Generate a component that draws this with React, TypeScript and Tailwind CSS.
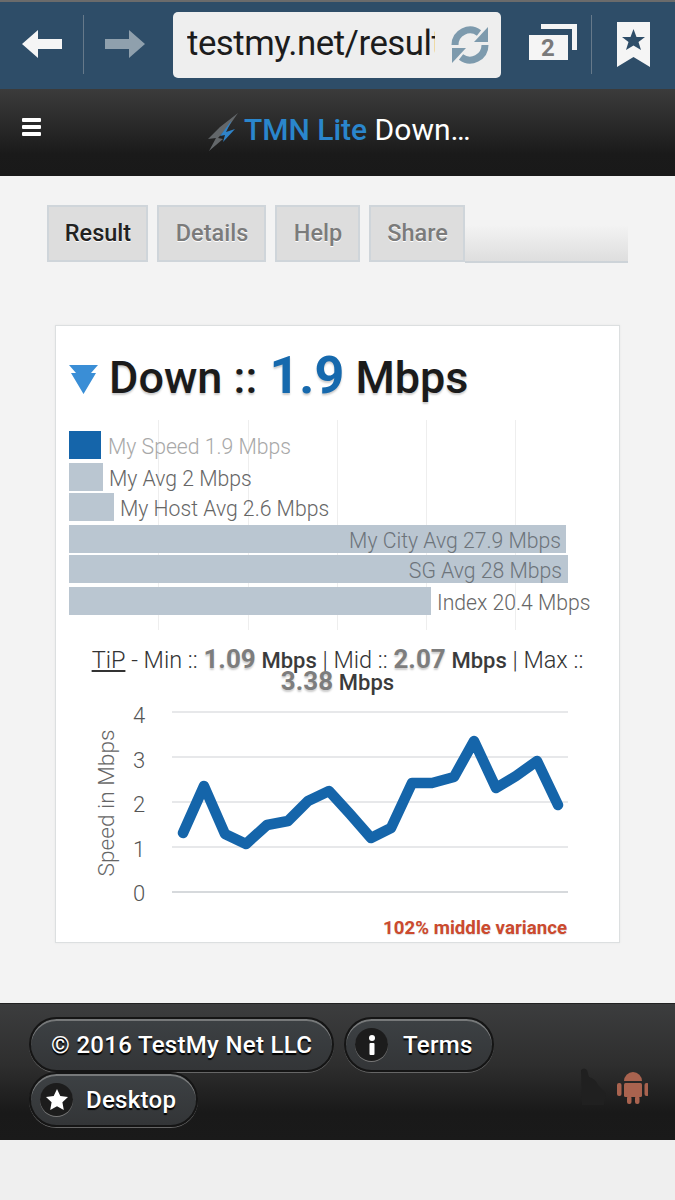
import React from "react";

const pts = "183,832 204,785 225,833 246,843 267,824 288,820 308,800 329,790 350,813 371,837 391,827 412,782 432,782 454,776 474,740 496,787 516,775 537,760 558,804";

function Arrow({ color, flip }: { color: string; flip?: boolean }) {
  return (
    <svg width="40" height="28" viewBox="0 0 40 28" className={flip ? "-scale-x-100" : ""}>
      <path d="M0 14 L16 0 V9 H40 V19 H16 V28 Z" fill={color} />
    </svg>
  );
}

function Sep() {
  return <div className="h-[59px] w-px mt-[2px] bg-[#66798a]" />;
}

function BrowserBar() {
  return (
    <div className="h-[89px] bg-[#2e4d68] border-t-2 border-[#6b6b6b] flex items-center pb-[5px]">
      <div className="w-[83px] pl-[22px] pt-[2px]"><Arrow color="#f5f5f5" /></div>
      <Sep />
      <div className="w-[89px] pl-[21px] pt-[2px]"><Arrow color="#8fa0ad" flip /></div>
      <div className="w-[328px] h-[66px] bg-[#eeeeee] rounded-[5px] flex items-center pl-[14px] mt-[4px]">
        <div className="w-[248px] overflow-hidden whitespace-nowrap text-[34.8px] tracking-[-0.5px] leading-none text-[#1c1c1c] pb-[3px]">testmy.net/result</div>
        <svg width="40" height="42" viewBox="0 0 40 42" className="ml-[15px]">
          <path d="M5 21 A15 15 0 0 1 29 9" fill="none" stroke="#7d9aad" strokeWidth="7" />
          <path d="M35 21 A15 15 0 0 1 11 33" fill="none" stroke="#7d9aad" strokeWidth="7" />
          <path d="M38 3 V18 H24 Z" fill="#7d9aad" />
          <path d="M2 39 V24 H16 Z" fill="#7d9aad" />
        </svg>
      </div>
      <div className="ml-[28px] w-[62px] relative h-[36px] mb-[2px]">
        <svg width="48" height="36" viewBox="0 0 48 36" className="absolute left-0 top-0">
          <path d="M12 0 H48 V26 H43 V5 H12 Z" fill="#f5f5f5" />
          <rect x="0" y="11" width="39" height="25" fill="#f5f5f5" />
        </svg>
        <span className="absolute left-[12px] top-[11px] text-[24px] leading-[26px] font-bold text-[#7a7a7a]">2</span>
      </div>
      <Sep />
      <svg width="33" height="45" viewBox="0 0 33 45" className="ml-[25px] mt-[3px]">
        <path d="M0 0 H33 V45 L16.5 35 L0 45 Z" fill="#f5f5f5" />
        <path d="M16.5 7 L19.5 15 H28 L21.5 20 L24 28 L16.5 23.5 L9 28 L11.5 20 L5 15 H13.5 Z" fill="#2e4d68" />
      </svg>
    </div>
  );
}

function Header() {
  return (
    <div className="h-[87px] bg-[linear-gradient(#3b3b3b,#2c2c2c_35%,#1a1a1a_75%,#191919)] flex items-center relative">
      <div className="absolute left-[22px] top-[29px] w-[19px] flex flex-col gap-[3px]">
        <div className="h-[4px] bg-white rounded-[1px]" />
        <div className="h-[4px] bg-white rounded-[1px]" />
        <div className="h-[4px] bg-white rounded-[1px]" />
      </div>
      <div className="ml-[207px] flex items-center -mt-[6px]">
        <svg width="33" height="38" viewBox="0 0 33 38" className="mt-[4px]">
          <path d="M31 0 L13 14 L1 26 L9 25 L2 38 L16 26 L11 25 L22 13 Z" fill="#63676a" />
          <path d="M25 7 L19 19 L28 16 L16 29 L18 22 L13 23 Z" fill="#2f83c8" />
        </svg>
        <span className="ml-[4px] text-[30px] leading-none whitespace-nowrap text-white">
          <span className="font-medium text-[#2a86cc]">TMN Lite</span> Down…
        </span>
      </div>
    </div>
  );
}

function Tab({ label, w, active }: { label: string; w: string; active?: boolean }) {
  return (
    <div className={`${w} h-[57px] bg-[#dddddd] border-2 border-[#cfd5da] flex items-center justify-center pl-[1px] text-[23.5px] font-medium [text-shadow:0_1px_0_#fff] ${active ? "text-[#222]" : "text-[#7b7b7b]"}`}>
      {label}
    </div>
  );
}

function Tabs() {
  return (
    <div className="ml-[47px] mt-[29px] w-[581px] flex h-[58px]">
      <div className="flex gap-[9px]">
        <Tab label="Result" w="w-[101px]" active />
        <Tab label="Details" w="w-[109px]" />
        <Tab label="Help" w="w-[85px]" />
        <Tab label="Share" w="w-[96px]" />
      </div>
      <div className="flex-1 mt-[20px] h-[38px] bg-[linear-gradient(#f3f3f3,#dedede)] border-b-2 border-[#cdd3d8]" />
    </div>
  );
}

const bars = [
  { label: "My Speed 1.9 Mbps", w: "w-[32px]", bg: "bg-[#1565aa]", mt: "mt-0", text: "text-[#a8a8a8]", gap: "ml-[7px]" },
  { label: "My Avg 2 Mbps", w: "w-[34px]", bg: "bg-[#bac6d1]", mt: "mt-[4px]", text: "text-[#666]", gap: "ml-[6px]" },
  { label: "My Host Avg 2.6 Mbps", w: "w-[45px]", bg: "bg-[#bac6d1]", mt: "mt-[2px]", text: "text-[#666]", gap: "ml-[6px]" },
];

function BarChart() {
  return (
    <div className="relative h-[210px] mt-[16px] ml-[13px]">
      <div className="absolute inset-0 pointer-events-none">
        {["left-[89px]", "left-[179px]", "left-[268px]", "left-[357px]", "left-[446px]"].map((l) => (
          <div key={l} className={`absolute top-0 bottom-0 w-px bg-[#eeeeee] ${l}`} />
        ))}
      </div>
      <div className="relative pt-[11px] text-[21.2px] leading-[28px] font-light">
        {bars.map((b) => (
          <div key={b.label} className={`flex h-[28px] ${b.mt}`}>
            <div className={`${b.w} ${b.bg}`} />
            <span className={`${b.gap} mt-[2px] whitespace-nowrap ${b.text}`}>{b.label}</span>
          </div>
        ))}
        <div className="mt-[4px] h-[28px] w-[497px] bg-[#bac6d1] text-right pr-[5px] pt-[2px] text-[#6d747b] whitespace-nowrap">My City Avg 27.9 Mbps</div>
        <div className="mt-[2px] h-[28px] w-[499px] bg-[#bac6d1] text-right pr-[6px] pt-[2px] text-[#6d747b] whitespace-nowrap">SG Avg 28 Mbps</div>
        <div className="mt-[4px] flex h-[28px]">
          <div className="w-[362px] bg-[#bac6d1]" />
          <span className="ml-[6px] mt-[2px] text-[#666] whitespace-nowrap">Index 20.4 Mbps</span>
        </div>
      </div>
    </div>
  );
}

function Num({ children }: { children: React.ReactNode }) {
  return <b className="text-[26px] leading-[10px] font-bold text-[#7d7d7d] [text-shadow:0_2px_2px_#ccc]">{children}</b>;
}
function Unit() {
  return <b className="text-[22px] leading-[10px] font-medium text-[#3b3b3b]">Mbps</b>;
}

function LineChart() {
  const ys = [711, 756, 801, 846, 891];
  return (
    <svg width="563" height="220" viewBox="56 700 563 220" className="block mt-[8px]">
      {ys.map((y, i) => (
        <line key={y} x1="172" x2="568" y1={y} y2={y} stroke={i === 4 ? "#c8ccd0" : "#dfe1e3"} strokeWidth="1.5" />
      ))}
      {["4", "3", "2", "1", "0"].map((t, i) => (
        <text key={t} x="139" y={722 + i * 44.5} textAnchor="middle" fontSize="22" fontWeight="300" fill="#555" fontFamily="Roboto, sans-serif">{t}</text>
      ))}
      <text transform="translate(114,802) rotate(-90)" textAnchor="middle" fontSize="22.7" fontWeight="300" fill="#666" fontFamily="Roboto, sans-serif">Speed in Mbps</text>
      <polyline points={pts} fill="none" stroke="#1565aa" strokeWidth="10.5" strokeLinejoin="round" strokeLinecap="round" />
    </svg>
  );
}

function Card() {
  return (
    <div className="ml-[55px] mt-[62px] w-[565px] h-[618px] bg-white border border-[#dcdfe0] shadow-[0_0_2px_#e6e6e6]">
      <div className="flex items-center mt-[26px] ml-[13px] h-[52px]">
        <svg width="29" height="30" viewBox="0 0 29 30" className="mt-[2px]">
          <path d="M0 1 H29 L22 9 L27 9 L14.5 30 L2 9 L7 9 Z" fill="#3a8ed6" />
        </svg>
        <h1 className="ml-[11px] -mt-[4px] text-[45px] leading-none font-medium text-[#1b1b1b] whitespace-nowrap [text-shadow:0_2px_2px_#ccc]">
          Down :: <span className="text-[52px] font-bold text-[#1669ad] ml-[1px]">1.9</span> Mbps
        </h1>
      </div>
      <BarChart />
      <div className="mt-[19px] text-center text-[23.5px] leading-[22px] font-light text-[#333] px-[16px]">
        <span className="underline">TiP</span> - Min :: <Num>1.09</Num> <Unit /> | Mid :: <Num>2.07</Num> <Unit /> | Max :: <Num>3.38</Num> <Unit />
      </div>
      <LineChart />
      <div className="text-right pr-[52px] -mt-[4px] text-[18.7px] leading-[22px] font-bold text-[#cc4a2e] [text-shadow:0_1px_1px_#ddd]">102% middle variance</div>
    </div>
  );
}

function Pill({ w, icon, children }: { w: string; icon?: React.ReactNode; children: React.ReactNode }) {
  return (
    <div className={`${w} h-[55px] rounded-full border-2 border-[#151515] bg-[linear-gradient(#3d4144,#333537)] shadow-[inset_0_2px_0_#77797a,0_1px_0_#666] flex items-center text-[24px] font-medium text-white tracking-[0.3px] [text-shadow:0_2px_1px_#000] whitespace-nowrap`}>
      {icon}
      {children}
    </div>
  );
}

function IconCircle({ children }: { children: React.ReactNode }) {
  return (
    <div className="ml-[9px] w-[33px] h-[33px] rounded-full bg-[#1c1c1c] shadow-[0_1px_0_#777] flex items-center justify-center">
      {children}
    </div>
  );
}

function Footer() {
  return (
    <div className="relative h-[137px] bg-[linear-gradient(#3c3d3e,#2e2e2e_45%,#191919_80%,#1a1a1a)] pt-[13px] pl-[29px] border-t border-[#222]">
      <div className="flex flex-wrap w-[480px] gap-x-[10px]">
        <Pill w="w-[305px] pl-[20px]">© 2016 TestMy Net LLC</Pill>
        <Pill w="w-[150px]" icon={
          <IconCircle>
            <svg width="6" height="20" viewBox="0 0 6 20"><circle cx="3" cy="3" r="3" fill="#fff" /><rect x="0.5" y="8" width="5" height="12" rx="1" fill="#fff" /></svg>
          </IconCircle>
        }><span className="ml-[15px]">Terms</span></Pill>
        <Pill w="w-[169px]" icon={
          <IconCircle>
            <svg width="22" height="22" viewBox="0 0 22 22"><path d="M11 0 L14.3 7 L22 8 L16.4 13.3 L17.8 21 L11 17.2 L4.2 21 L5.6 13.3 L0 8 L7.7 7 Z" fill="#fff" /></svg>
          </IconCircle>
        }><span className="ml-[13px]">Desktop</span></Pill>
      </div>
      <svg width="70" height="40" viewBox="0 0 70 40" className="absolute left-[578px] top-[63px]">
        <path d="M3 3 Q6 0 9 3 L11 10 Q18 12 20 18 L28 26 L26 38 H4 Z" fill="#202020" />
        <g fill="#a9634f" transform="translate(39 1)">
          <path d="M7 13 A9 9 0 0 1 25 13 Z" />
          <rect x="7" y="15" width="18" height="14" rx="1.5" />
          <rect x="0" y="15" width="4.5" height="13" rx="2" />
          <rect x="27.5" y="15" width="4.5" height="13" rx="2" />
          <rect x="10" y="28" width="4.5" height="8" rx="2" />
          <rect x="18" y="28" width="4.5" height="8" rx="2" />
        </g>
      </svg>
    </div>
  );
}

export default function App() {
  return (
    <div className="w-[675px] h-[1200px] overflow-hidden bg-[#efefef] font-['Roboto',sans-serif]">
      <BrowserBar />
      <Header />
      <div className="h-[827px] bg-[#f3f3f3] overflow-hidden">
        <Tabs />
        <Card />
      </div>
      <Footer />
    </div>
  );
}
